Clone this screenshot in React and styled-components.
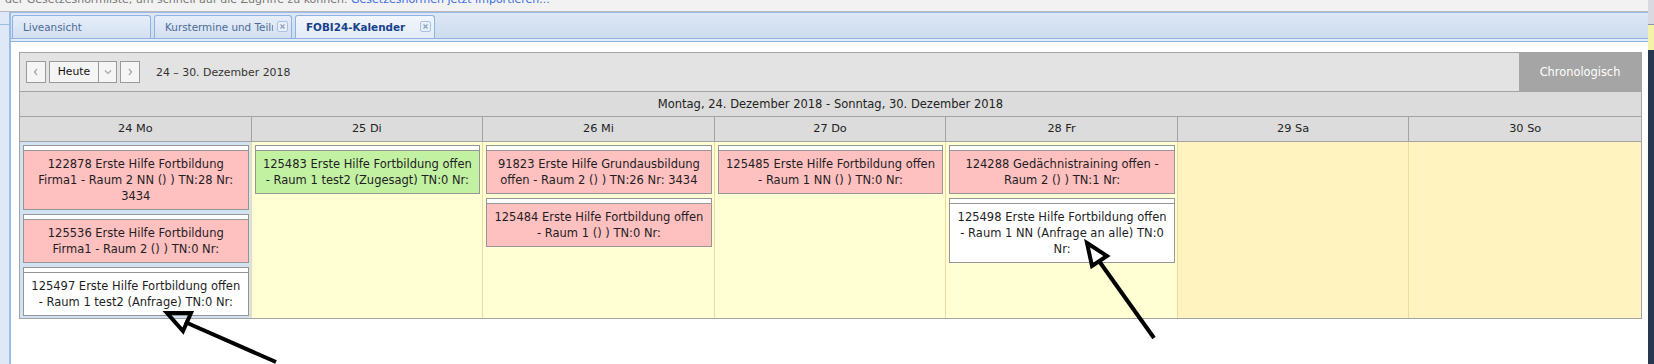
import React from "react";
import styled, { createGlobalStyle } from "styled-components";

const GlobalStyle = createGlobalStyle`
  html, body {
    margin: 0;
    padding: 0;
    background: #fff;
    overflow: hidden;
  }
  body {
    font-family: "DejaVu Sans", Verdana, sans-serif;
    color: #222;
  }
`;

const Page = styled.div`
  position: relative;
  display: flex;
  width: 1654px;
  height: 364px;
  overflow: hidden;
`;

const Content = styled.div`
  flex: 1;
  min-width: 0;
  display: flex;
  flex-direction: column;
`;

const Notice = styled.div`
  height: 11px;
  border-bottom: 1px solid #b9b9b9;
  background: #f2f2f2;
  overflow: hidden;
  white-space: nowrap;
  font-size: 11px;
  line-height: 11px;
  color: #777;
`;

const NoticeText = styled.div`
  margin: -6px 0 0 -3px;
`;

const NoticeLink = styled.span`
  color: #3a6ee0;
`;

const Main = styled.div`
  flex: 1;
  min-height: 0;
  display: flex;
`;

const SideStrip = styled.div`
  width: 9px;
  background: #dfe8f6;
  border-right: 2px solid #99bbe8;
`;

const SideKnob = styled.div`
  height: 12px;
  border-bottom: 1px solid #99bbe8;
`;

const Workspace = styled.div`
  flex: 1;
  min-width: 0;
  display: flex;
  flex-direction: column;
`;

const TabBar = styled.div`
  height: 25px;
  border-top: 1px solid #99bbe8;
  border-bottom: 1px solid #8db2e3;
  background: linear-gradient(#dde7f5, #cddcef);
  display: flex;
  align-items: flex-end;
  gap: 3px;
  padding-left: 1px;
`;

const TabGap = styled.div`
  height: 2px;
  background: #e4ecf7;
  border-bottom: 1px solid #8db2e3;
`;

const Tab = styled.div`
  box-sizing: border-box;
  width: ${(p) => p.w}px;
  height: 23px;
  border: 1px solid #8db2e3;
  border-bottom: none;
  border-radius: 3px 3px 0 0;
  background: ${(p) =>
    p.active
      ? "linear-gradient(#f2f6fc, #e3ecf8)"
      : "linear-gradient(#e6eef9, #d3e0f1)"};
  color: ${(p) => (p.active ? "#15428b" : "#4b6a98")};
  font-weight: ${(p) => (p.active ? "bold" : "normal")};
  font-size: 10.4px;
  line-height: 22px;
  padding: 0 3px 0 10px;
  display: flex;
  align-items: center;
  gap: 4px;
`;

const TabLabel = styled.span`
  flex: 1;
  overflow: hidden;
  white-space: nowrap;
`;

const CloseBox = styled.span`
  width: 9px;
  height: 9px;
  border: 1px solid #a9c2e4;
  border-radius: 2px;
  background: #e8eff9;
  display: flex;
  align-items: center;
  justify-content: center;
  margin-bottom: 1px;
`;

const Panel = styled.div`
  flex: 1;
  background: #fff;
  padding: 10px 6px 0 8px;
`;

const Calendar = styled.div`
  border: 1px solid #a3a3a3;
`;

const Toolbar = styled.div`
  height: 38px;
  background: #e3e3e3;
  border-bottom: 1px solid #a3a3a3;
  display: flex;
  align-items: center;
  padding-left: 6px;
`;

const NavButton = styled.div`
  box-sizing: border-box;
  width: 20px;
  height: 22px;
  border: 1px solid #9a9a9a;
  background: #f5f5f5;
  display: flex;
  align-items: center;
  justify-content: center;
  margin-right: 3px;
`;

const SplitButton = styled.div`
  box-sizing: border-box;
  height: 22px;
  border: 1px solid #9a9a9a;
  background: #f5f5f5;
  display: flex;
  margin-right: 3px;
`;

const SplitMain = styled.div`
  width: 48px;
  border-right: 1px solid #9a9a9a;
  font-size: 10.8px;
  line-height: 20px;
  text-align: center;
  color: #111;
`;

const SplitArrow = styled.div`
  width: 17px;
  display: flex;
  align-items: center;
  justify-content: center;
`;

const RangeLabel = styled.div`
  margin-left: 13px;
  font-size: 10.9px;
  color: #333;
`;

const ModeButton = styled.div`
  margin-left: auto;
  width: 122px;
  height: 38px;
  background: #a5a5a5;
  color: #fff;
  font-size: 11.4px;
  display: flex;
  align-items: center;
  justify-content: center;
`;

const TitleRow = styled.div`
  height: 24px;
  background: #dcdcdc;
  border-bottom: 1px solid #a3a3a3;
  font-size: 11.5px;
  line-height: 24px;
  text-align: center;
`;

const DayGrid = styled.div`
  display: grid;
  grid-template-columns: repeat(7, 1fr);
`;

const DayHead = styled.div`
  height: 24px;
  background: #dcdcdc;
  border-bottom: 1px solid #a3a3a3;
  border-right: ${(p) => (p.last ? "none" : "1px solid #a3a3a3")};
  font-size: 11.3px;
  line-height: 24px;
  text-align: center;
`;

const dayBg = { today: "#d3e2f3", work: "#ffffd3", weekend: "#fff3bf" };

const DayCell = styled.div`
  min-width: 0;
  background: ${(p) => dayBg[p.kind]};
  border-right: ${(p) => (p.last ? "none" : "1px solid #f1d9a2")};
  padding: 3px 2px 2px 3px;
  display: flex;
  flex-direction: column;
  gap: 4px;
`;

const cardBg = { red: "#ffc0c0", green: "#c3f1a2", white: "#ffffff" };

const Card = styled.div`
  border: 1px solid #969696;
  background: ${(p) => cardBg[p.tone]};
`;

const CardStrip = styled.div`
  height: 4px;
  background: #fff;
  border-bottom: 1px solid #969696;
`;

const CardText = styled.div`
  padding: 5px 5px;
  font-size: 11.5px;
  line-height: 16px;
  text-align: center;
  color: #1e1e24;
`;

const Rail = styled.div`
  width: 6px;
  display: flex;
  flex-direction: column;
`;

const RailTop = styled.div`
  height: 24px;
  background: #d9d9e2;
  border-bottom: 1px solid #8a91b3;
`;

const RailMark = styled.div`
  height: 25px;
  background: #f4f1a8;
`;

const RailTrack = styled.div`
  flex: 1;
  background: #283750;
`;

const Overlay = styled.svg`
  position: absolute;
  left: 0;
  top: 0;
  pointer-events: none;
`;

const Chevron = ({ dir }) => (
  <svg width="6" height="8" viewBox="0 0 6 8">
    <polyline
      points={dir === "left" ? "4,1 1.5,4 4,7" : "2,1 4.5,4 2,7"}
      fill="none"
      stroke="#a8a8a8"
      strokeWidth="1.3"
    />
  </svg>
);

const CloseIcon = () => (
  <CloseBox>
    <svg width="5" height="5" viewBox="0 0 5 5">
      <path d="M0.5 0.5 L4.5 4.5 M4.5 0.5 L0.5 4.5" stroke="#8aa0c0" strokeWidth="1.2" />
    </svg>
  </CloseBox>
);

const days = [
  {
    label: "24 Mo",
    kind: "today",
    events: [
      { tone: "red", text: "122878 Erste Hilfe Fortbildung Firma1 - Raum 2 NN () ) TN:28 Nr: 3434" },
      { tone: "red", text: "125536 Erste Hilfe Fortbildung Firma1 - Raum 2 () ) TN:0 Nr:" },
      { tone: "white", text: "125497 Erste Hilfe Fortbildung offen - Raum 1 test2 (Anfrage) TN:0 Nr:" },
    ],
  },
  {
    label: "25 Di",
    kind: "work",
    events: [
      { tone: "green", text: "125483 Erste Hilfe Fortbildung offen - Raum 1 test2 (Zugesagt) TN:0 Nr:" },
    ],
  },
  {
    label: "26 Mi",
    kind: "work",
    events: [
      { tone: "red", text: "91823 Erste Hilfe Grundausbildung offen - Raum 2 () ) TN:26 Nr: 3434" },
      { tone: "red", text: "125484 Erste Hilfe Fortbildung offen - Raum 1 () ) TN:0 Nr:" },
    ],
  },
  {
    label: "27 Do",
    kind: "work",
    events: [
      { tone: "red", text: "125485 Erste Hilfe Fortbildung offen - Raum 1 NN () ) TN:0 Nr:" },
    ],
  },
  {
    label: "28 Fr",
    kind: "work",
    events: [
      { tone: "red", text: "124288 Gedächnistraining offen - Raum 2 () ) TN:1 Nr:" },
      { tone: "white", text: "125498 Erste Hilfe Fortbildung offen - Raum 1 NN (Anfrage an alle) TN:0 Nr:" },
    ],
  },
  { label: "29 Sa", kind: "weekend", events: [] },
  { label: "30 So", kind: "weekend", events: [] },
];

const tabs = [
  { label: "Liveansicht", w: 139 },
  { label: "Kurstermine und Teilnehmer", w: 138, closable: true },
  { label: "FOBI24-Kalender", w: 140, closable: true, active: true },
];

export default function App() {
  return (
    <Page>
      <GlobalStyle />
      <Content>
        <Notice>
          <NoticeText>
            r der Gesetzesnormliste, um schnell auf die Zugriffe zu können.{" "}
            <NoticeLink>Gesetzesnormen jetzt importieren...</NoticeLink>
          </NoticeText>
        </Notice>
        <Main>
          <SideStrip>
            <SideKnob />
          </SideStrip>
          <Workspace>
            <TabBar>
              {tabs.map((t) => (
                <Tab key={t.label} w={t.w} active={t.active}>
                  <TabLabel>{t.label}</TabLabel>
                  {t.closable && <CloseIcon />}
                </Tab>
              ))}
            </TabBar>
            <TabGap />
            <Panel>
              <Calendar>
                <Toolbar>
                  <NavButton>
                    <Chevron dir="left" />
                  </NavButton>
                  <SplitButton>
                    <SplitMain>Heute</SplitMain>
                    <SplitArrow>
                      <svg width="8" height="6" viewBox="0 0 8 6">
                        <polyline points="1,1.5 4,4.5 7,1.5" fill="none" stroke="#a8a8a8" strokeWidth="1.2" />
                      </svg>
                    </SplitArrow>
                  </SplitButton>
                  <NavButton>
                    <Chevron dir="right" />
                  </NavButton>
                  <RangeLabel>24 – 30. Dezember 2018</RangeLabel>
                  <ModeButton>Chronologisch</ModeButton>
                </Toolbar>
                <TitleRow>Montag, 24. Dezember 2018 - Sonntag, 30. Dezember 2018</TitleRow>
                <DayGrid>
                  {days.map((d, i) => (
                    <DayHead key={d.label} last={i === days.length - 1}>
                      {d.label}
                    </DayHead>
                  ))}
                  {days.map((d, i) => (
                    <DayCell key={d.label} kind={d.kind} last={i === days.length - 1}>
                      {d.events.map((e) => (
                        <Card key={e.text} tone={e.tone}>
                          <CardStrip />
                          <CardText>{e.text}</CardText>
                        </Card>
                      ))}
                    </DayCell>
                  ))}
                </DayGrid>
              </Calendar>
            </Panel>
          </Workspace>
        </Main>
      </Content>
      <Rail>
        <RailTop />
        <RailMark />
        <RailTrack />
      </Rail>
      <Overlay width="1654" height="364">
        <g fill="none" stroke="#000" strokeWidth="4" strokeLinejoin="miter">
          <line x1="185" y1="322" x2="276" y2="362" />
          <polygon points="167,313 191,313 183,331" />
          <line x1="1099" y1="261" x2="1154" y2="338" />
          <polygon points="1087,243 1107,256 1092,266" />
        </g>
      </Overlay>
    </Page>
  );
}
